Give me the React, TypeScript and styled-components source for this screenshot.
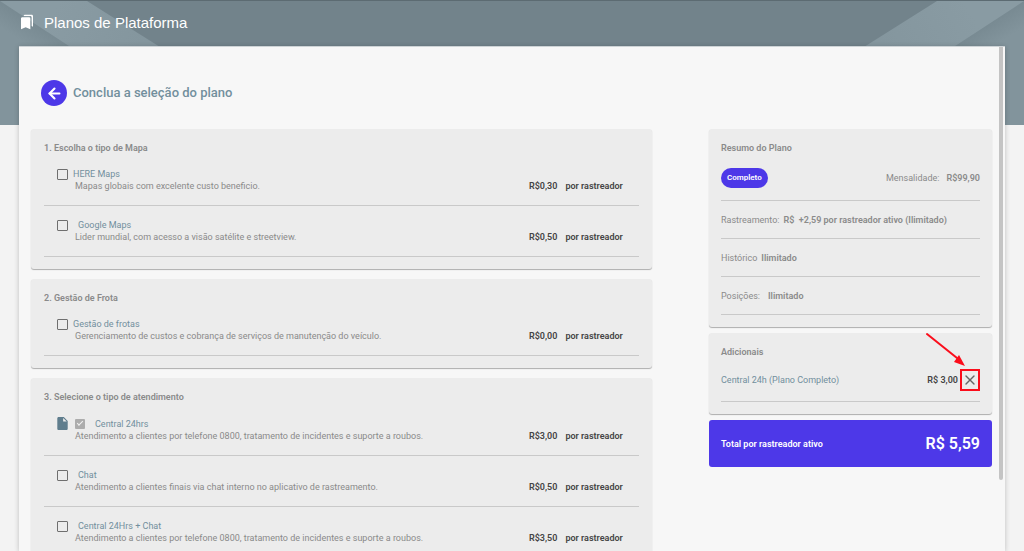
import React from "react";
import styled, { createGlobalStyle, css } from "styled-components";
import { MdBookmarks } from "react-icons/md";
import { ArrowLeft, X } from "lucide-react";

const font = `Roboto, "Noto Sans", "Liberation Sans", sans-serif`;
const indigo = "#4d38e8";
const slate = "#728f9d";
const muted = "#8a8a8a";

const GlobalStyle = createGlobalStyle`
  *, *::before, *::after { box-sizing: border-box; }
  body {
    margin: 0;
    background: #f3f3f3;
    color: ${muted};
    font-family: ${font};
    font-size: 9px;
    line-height: 12px;
  }
  button, input { font: inherit; margin: 0; }
  h1, h2, h3, p { margin: 0; }
  b { font-weight: 600; }
`;

const Page = styled.div`
  display: grid;
  grid-template-columns: minmax(0, 1fr);
  height: 100vh;
  overflow: hidden;
`;

const Backdrop = styled.div`
  grid-area: 1 / 1;
  display: flex;
  justify-content: space-between;
  height: 125px;
  background: #72838b;
  border-top: 1px solid #5c6b72;
`;

const Layer = styled.div`
  grid-area: 1 / 1;
  display: flex;
  flex-direction: column;
  min-height: 0;
  z-index: 1;
`;

const TopBar = styled.header`
  display: flex;
  align-items: center;
  gap: 9px;
  height: 46px;
  flex: none;
  padding: 0 19px;
  color: #fff;
`;

const IconLift = styled.span`
  display: flex;
  padding-bottom: 3px;
`;

const TopTitle = styled.h1`
  font: 400 15px/18px "Liberation Sans", Arial, sans-serif;
`;

const Panel = styled.main`
  position: relative;
  display: flex;
  flex: 1;
  min-height: 0;
  margin: 0 19px;
  background: #f7f7f7;
  border-top: 1px solid #cdd3d6;
  box-shadow: 0 1px 5px rgba(0, 0, 0, 0.22);
`;

const Scroller = styled.div`
  flex: 1;
  min-width: 0;
  overflow-y: auto;
  scrollbar-width: none;
  padding: 33px 13px 24px 12px;
`;

const ScrollThumb = styled.div`
  position: absolute;
  top: 0;
  right: 2px;
  width: 4px;
  height: 86%;
  border-radius: 0 0 2px 2px;
  background: #c4c4c4;
`;

const Heading = styled.div`
  display: flex;
  align-items: center;
  gap: 6px;
  padding-left: 10px;
  margin-bottom: 23px;
`;

const BackButton = styled.button`
  display: flex;
  align-items: center;
  justify-content: center;
  width: 26px;
  height: 26px;
  padding: 0;
  border: 0;
  border-radius: 50%;
  background: ${indigo};
  color: #fff;
  cursor: pointer;
`;

const HeadingText = styled.h2`
  font-size: 13px;
  line-height: 16px;
  font-weight: 500;
  color: ${slate};
`;

const Columns = styled.div`
  display: grid;
  grid-template-columns: minmax(0, 621fr) minmax(0, 283fr);
  column-gap: 57px;
  align-items: start;
`;

const Stack = styled.div<{ $gap: number }>`
  display: flex;
  flex-direction: column;
  gap: ${(p) => p.$gap}px;
`;

const Card = styled.section<{ $side?: boolean }>`
  padding: 12px ${(p) => (p.$side ? 12 : 13)}px;
  border-radius: 3px;
  background: #ececec;
  box-shadow: 0 1px 1px rgba(0, 0, 0, 0.3);
`;

const CardTitle = styled.h3`
  font-size: 9px;
  line-height: 14px;
  font-weight: 600;
`;

const OptionRow = styled.div`
  padding: 13px 12px 13px 13px;
  border-bottom: 1px solid #c9c9c9;
`;

const OptionHead = styled.div`
  display: flex;
  align-items: center;
`;

const FileIcon = styled.svg`
  margin-right: 7px;
  fill: #5f7d8d;
`;

const Checkbox = styled.input`
  appearance: none;
  display: grid;
  place-items: center;
  width: 11px;
  height: 11px;
  border: 1px solid #6f6f6f;
  border-radius: 1px;

  &:disabled {
    width: 10px;
    height: 10px;
    border: 0;
    background: #adadad;
  }

  &:checked::after {
    content: "";
    width: 6px;
    height: 3px;
    margin-bottom: 2px;
    border: solid #f4f4f4;
    border-width: 0 0 1px 1px;
    transform: rotate(-45deg);
  }
`;

const OptionLabel = styled.label<{ $wide?: boolean }>`
  padding-left: ${(p) => (p.$wide ? 10 : 5)}px;
  color: ${slate};
`;

const OptionFoot = styled.div`
  display: flex;
  justify-content: space-between;
  gap: 12px;
  padding-left: 18px;
`;

const Price = styled.p`
  display: flex;
  gap: 8px;
  flex: none;
  width: 98px;
  font-weight: 600;
  color: #444;
`;

const SummaryRow = styled.div<{ $height?: number; $spread?: boolean }>`
  display: flex;
  align-items: center;
  height: ${(p) => p.$height ?? 38}px;
  border-bottom: 1px solid #c9c9c9;
  ${(p) =>
    p.$spread &&
    css`
      justify-content: space-between;
    `}
`;

const Pair = styled.p<{ $gap: number }>`
  display: flex;
  gap: ${(p) => p.$gap}px;
  white-space: pre;
`;

const Pill = styled.span`
  padding: 0 6px;
  border-radius: 10px;
  background: ${indigo};
  color: #fff;
  font-size: 8px;
  line-height: 20px;
  font-weight: 600;
`;

const Extra = styled.p`
  color: ${slate};
`;

const ExtraPrice = styled.div`
  display: flex;
  align-items: center;
  gap: 2px;
  color: #444;
`;

const RemoveButton = styled.button`
  position: relative;
  display: flex;
  align-items: center;
  justify-content: center;
  width: 20px;
  height: 22px;
  padding: 0;
  border: 2px solid #fb0d1b;
  background: transparent;
  color: #666;
  cursor: pointer;
`;

const Pointer = styled.svg`
  position: absolute;
  right: 12px;
  bottom: 21px;
  pointer-events: none;
`;

const Total = styled.section`
  display: flex;
  align-items: center;
  justify-content: space-between;
  padding: 12px;
  border-radius: 3px;
  background: ${indigo};
  color: #fff;
  font-weight: 600;
`;

const TotalValue = styled.strong`
  font-size: 16px;
  line-height: 23px;
  font-weight: 600;
`;

interface Option {
  id: string;
  name: string;
  text: string;
  price: string;
  wide?: boolean;
  included?: boolean;
}

const groups: { title: string; options: Option[] }[] = [
  {
    title: "1. Escolha o tipo de Mapa",
    options: [
      { id: "here", name: "HERE Maps", text: "Mapas globais com excelente custo beneficio.", price: "R$0,30" },
      { id: "google", name: "Google Maps", text: "Lider mundial, com acesso a visão satélite e streetview.", price: "R$0,50", wide: true },
    ],
  },
  {
    title: "2. Gestão de Frota",
    options: [
      { id: "frotas", name: "Gestão de frotas", text: "Gerenciamento de custos e cobrança de serviços de manutenção do veículo.", price: "R$0,00" },
    ],
  },
  {
    title: "3. Selecione o tipo de atendimento",
    options: [
      { id: "central", name: "Central 24hrs", text: "Atendimento a clientes por telefone 0800, tratamento de incidentes e suporte a roubos.", price: "R$3,00", wide: true, included: true },
      { id: "chat", name: "Chat", text: "Atendimento a clientes finais via chat interno no aplicativo de rastreamento.", price: "R$0,50", wide: true },
      { id: "both", name: "Central 24Hrs + Chat", text: "Atendimento a clientes por telefone 0800, tratamento de incidentes e suporte a roubos.", price: "R$3,50", wide: true },
    ],
  },
];

function Ribbon({ side }: { side: "left" | "right" }) {
  return (
    <svg width="290" height="124" viewBox="0 0 290 124" aria-hidden="true">
      <defs>
        <linearGradient id={`band-${side}`} gradientUnits="userSpaceOnUse" x1="60" y1="0" x2="140" y2="46">
          <stop offset="0" stopColor="#899ba3" />
          <stop offset="1" stopColor="#84969e" />
        </linearGradient>
        <linearGradient id={`fold-${side}`} gradientUnits="userSpaceOnUse" x1="40" y1="25" x2="28" y2="44">
          <stop offset="0" stopColor="#788a92" />
          <stop offset="1" stopColor="#82949c" />
        </linearGradient>
      </defs>
      <g transform={side === "right" ? "translate(290 0) scale(-1 1)" : undefined}>
        <path d="M0 0H87L284 124H0Z" fill={`url(#band-${side})`} />
        <path d="M0 0L190 124H0Z" fill={`url(#fold-${side})`} />
      </g>
    </svg>
  );
}

function OptionItem({ option }: { option: Option }) {
  return (
    <OptionRow>
      <OptionHead>
        {option.included && (
          <FileIcon width="11" height="13" viewBox="4 2 16 20" aria-hidden="true">
            <path d="M6 2c-1.100 0-2 .9-2 2v16c0 1.100.9 2 2 2h12c1.100 0 2-.9 2-2V8l-6-6H6zm7 7V3.500L18.500 9H13z" />
          </FileIcon>
        )}
        <Checkbox type="checkbox" id={option.id} defaultChecked={option.included} disabled={option.included} />
        <OptionLabel htmlFor={option.id} $wide={option.wide}>
          {option.name}
        </OptionLabel>
      </OptionHead>
      <OptionFoot>
        <p>{option.text}</p>
        <Price>
          <span>{option.price}</span>
          <span>por rastreador</span>
        </Price>
      </OptionFoot>
    </OptionRow>
  );
}

export default function App() {
  return (
    <Page>
      <GlobalStyle />
      <Backdrop>
        <Ribbon side="left" />
        <Ribbon side="right" />
      </Backdrop>
      <Layer>
        <TopBar>
          <IconLift>
            <MdBookmarks size={16} />
          </IconLift>
          <TopTitle>Planos de Plataforma</TopTitle>
        </TopBar>
        <Panel>
          <Scroller>
            <Heading>
              <BackButton type="button" aria-label="Voltar">
                <ArrowLeft size={17} strokeWidth={3} />
              </BackButton>
              <HeadingText>Conclua a seleção do plano</HeadingText>
            </Heading>
            <Columns>
              <Stack $gap={10}>
                {groups.map((group) => (
                  <Card key={group.title}>
                    <CardTitle>{group.title}</CardTitle>
                    {group.options.map((option) => (
                      <OptionItem key={option.id} option={option} />
                    ))}
                  </Card>
                ))}
              </Stack>
              <Stack $gap={6}>
                <Card $side>
                  <CardTitle>Resumo do Plano</CardTitle>
                  <SummaryRow $height={46} $spread>
                    <Pill>Completo</Pill>
                    <Pair $gap={7}>
                      <span>Mensalidade:</span>
                      <b>R$99,90</b>
                    </Pair>
                  </SummaryRow>
                  <SummaryRow>
                    <Pair $gap={4}>
                      <span>Rastreamento:</span>
                      <b>R$  +2,59 por rastreador ativo (Ilimitado)</b>
                    </Pair>
                  </SummaryRow>
                  <SummaryRow>
                    <Pair $gap={4}>
                      <span>Histórico</span>
                      <b>Ilimitado</b>
                    </Pair>
                  </SummaryRow>
                  <SummaryRow>
                    <Pair $gap={8}>
                      <span>Posições:</span>
                      <b>Ilimitado</b>
                    </Pair>
                  </SummaryRow>
                </Card>
                <Card $side>
                  <CardTitle>Adicionais</CardTitle>
                  <SummaryRow $height={43} $spread>
                    <Extra>Central 24h (Plano Completo)</Extra>
                    <ExtraPrice>
                      <b>R$ 3,00</b>
                      <RemoveButton type="button" aria-label="Remover Central 24h">
                        <X size={18} strokeWidth={2} />
                        <Pointer width="42" height="36" viewBox="0 0 42 36" aria-hidden="true">
                          <path d="M3 2L33 26" stroke="#fb0d1b" strokeWidth="2" strokeLinecap="round" />
                          <path d="M41 34L30 30L35 23Z" fill="#fb0d1b" />
                        </Pointer>
                      </RemoveButton>
                    </ExtraPrice>
                  </SummaryRow>
                </Card>
                <Total>
                  <span>Total por rastreador ativo</span>
                  <TotalValue>R$ 5,59</TotalValue>
                </Total>
              </Stack>
            </Columns>
          </Scroller>
          <ScrollThumb />
        </Panel>
      </Layer>
    </Page>
  );
}
